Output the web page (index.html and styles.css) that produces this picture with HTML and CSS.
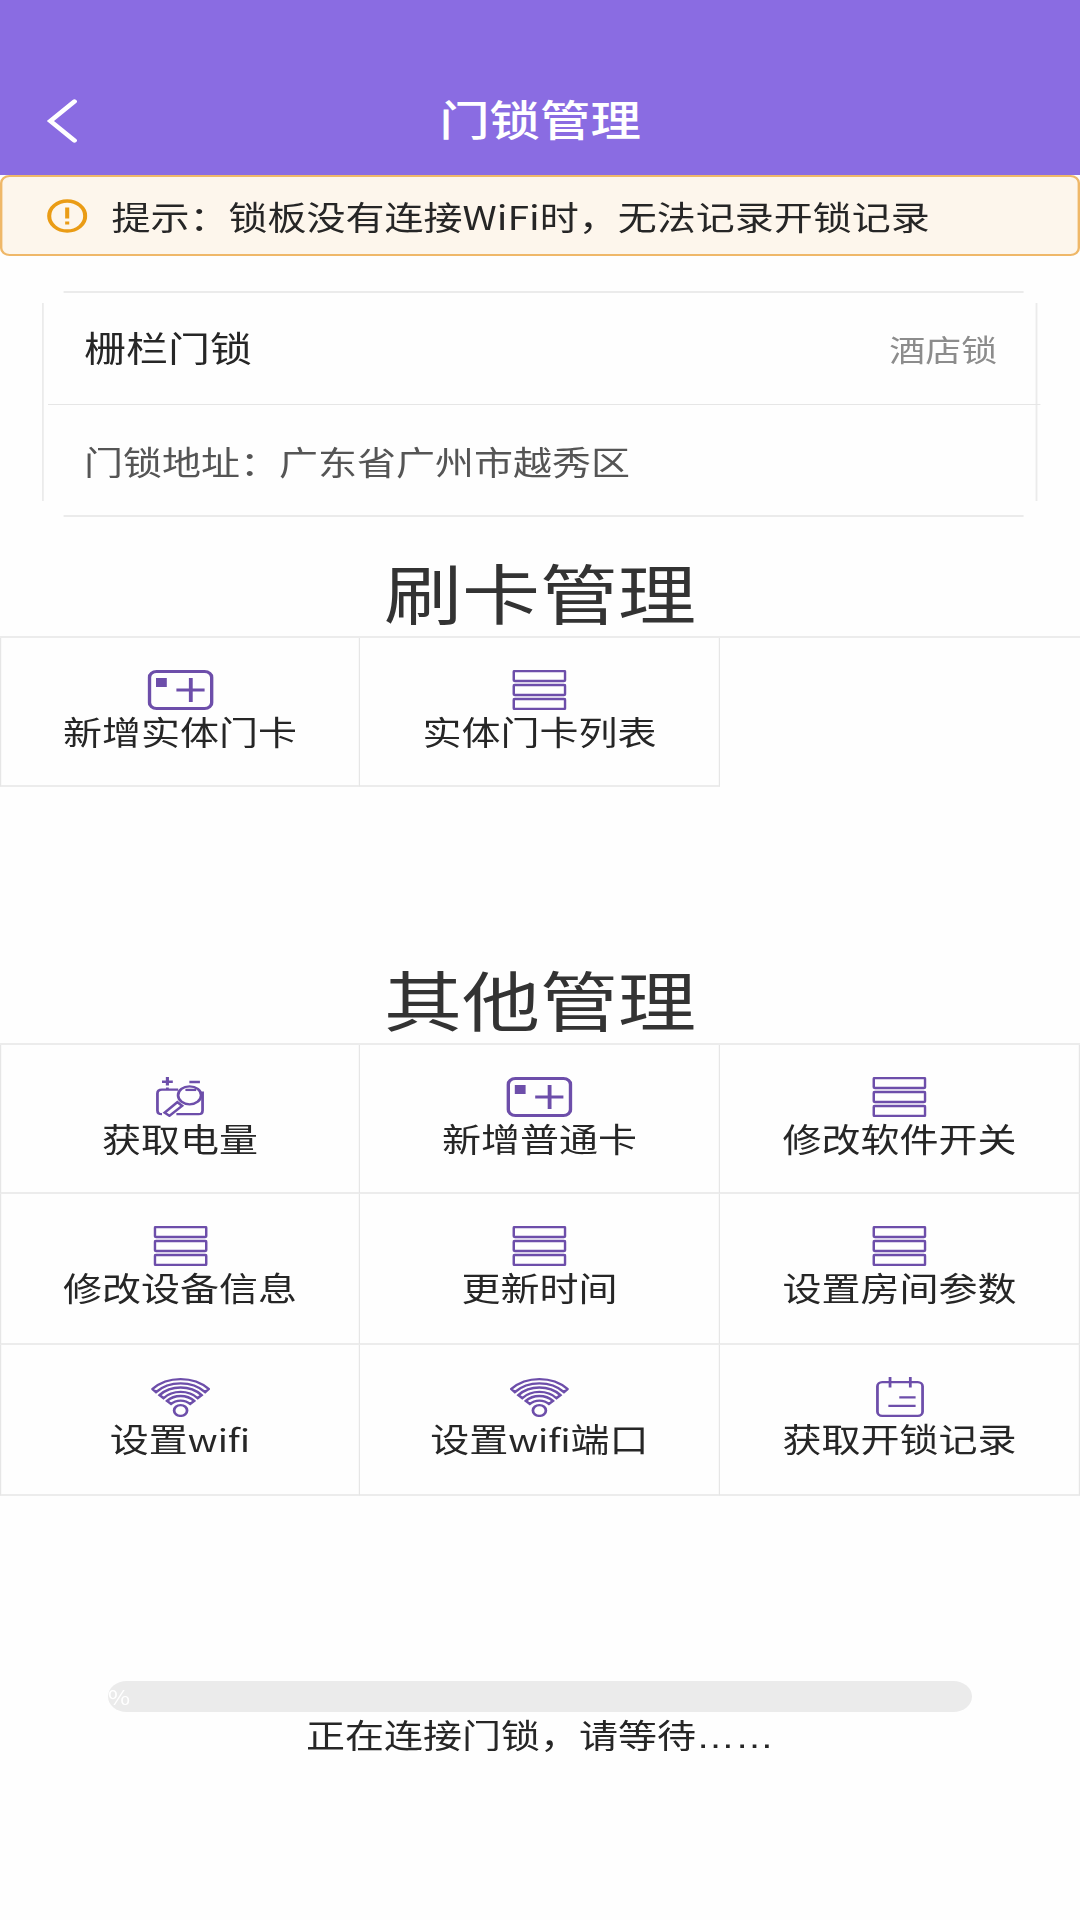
FILE: index.html
```
<!DOCTYPE html>
<html lang="zh-CN">
<head>
  <meta charset="UTF-8">
  <title>门锁管理</title>
  <meta name="viewport" content="width=device-width, initial-scale=1.0">
  <link rel="stylesheet" href="styles.css">
</head>
<body>
  <!-- icons -->
  <svg class="sprite" width="0" height="0">
    <symbol id="icon-card" viewBox="0 0 55 40">
      <rect x="1.5" y="1.5" width="52" height="37" rx="6" stroke-width="3"/>
      <rect x="7" y="8" width="9" height="9" fill="currentColor" stroke="none"/>
      <path d="M24 20h23.5M36 8v24" stroke-width="3.2"/>
    </symbol>
    <symbol id="icon-list" viewBox="0 0 45 40">
      <rect x="1" y="1" width="43" height="10" rx="1"/>
      <rect x="1" y="15" width="43" height="10" rx="1"/>
      <rect x="1" y="29" width="43" height="10" rx="1"/>
    </symbol>
    <symbol id="icon-battery" viewBox="0 0 40 40">
      <path d="M5 4.7h9M9.5 0v8.5M27.8 5h8.8" stroke-width="2.6"/>
      <path d="M5 37.2Q1.2 37.2 1.2 33.5V16.5Q1.2 12.7 5 12.7H18.5M9.5 10.5v2M17 37.2h18.5Q38.8 37.2 38.8 33.5V14.5"/>
      <ellipse cx="28" cy="18.3" rx="9.6" ry="9"/>
      <path d="M17.8 25.2l4 3.6-10.6 10-4-3.2z"/>
      <path d="M24.5 12.9h9"/>
    </symbol>
    <symbol id="icon-wifi" viewBox="0 0 49 40">
      <path d="M1 12A33 33 0 0 1 48 12L45 15.1A28.5 28.5 0 0 0 4 15.1Z"/>
      <path d="M7 18.1A24 24 0 0 1 42 18.1L38.8 21.2A19.5 19.5 0 0 0 10.2 21.2Z"/>
      <path d="M13.2 23.9A15.5 15.5 0 0 1 35.8 23.9L32.5 27A11 11 0 0 0 16.5 27Z"/>
      <circle cx="24.5" cy="33.5" r="5.4"/>
    </symbol>
    <symbol id="icon-record" viewBox="0 0 40 40">
      <rect x="1.2" y="5.2" width="37.6" height="33.6" rx="4"/>
      <path d="M11.7 0v10.5M28.6 0v10.5M19.4 20.4H33M10.3 28.8H33"/>
    </symbol>
  </svg>

  <div class="page">
    <header class="navbar">
      <svg class="back" width="26" height="44" viewBox="0 0 26 44"><path d="M23 2.5L3 22l20 19.5"/></svg>
      <h1 class="title">门锁管理</h1>
    </header>

    <div class="tip">
      <svg class="tip-icon" width="34" height="34" viewBox="0 0 34 34">
        <circle cx="17" cy="17" r="15"/>
        <path d="M17 8.5v11M17 22.5v3"/>
      </svg>
      <span>提示：锁板没有连接WiFi时，无法记录开锁记录</span>
    </div>

    <section class="card">
      <div class="card-head">
        <span class="lock-name">栅栏门锁</span>
        <span class="lock-type">酒店锁</span>
      </div>
      <div class="card-body">门锁地址：广东省广州市越秀区</div>
    </section>

    <h2 class="heading">刷卡管理</h2>
    <div class="grid">
      <div class="cell"><svg class="icon icon-wide"><use href="#icon-card"/></svg><span>新增实体门卡</span></div>
      <div class="cell"><svg class="icon icon-list"><use href="#icon-list"/></svg><span>实体门卡列表</span></div>
    </div>

    <h2 class="heading heading-other">其他管理</h2>
    <div class="grid">
      <div class="cell"><svg class="icon"><use href="#icon-battery"/></svg><span>获取电量</span></div>
      <div class="cell"><svg class="icon icon-wide"><use href="#icon-card"/></svg><span>新增普通卡</span></div>
      <div class="cell"><svg class="icon icon-list"><use href="#icon-list"/></svg><span>修改软件开关</span></div>
      <div class="cell"><svg class="icon icon-list"><use href="#icon-list"/></svg><span>修改设备信息</span></div>
      <div class="cell"><svg class="icon icon-list"><use href="#icon-list"/></svg><span>更新时间</span></div>
      <div class="cell"><svg class="icon icon-list"><use href="#icon-list"/></svg><span>设置房间参数</span></div>
      <div class="cell"><svg class="icon icon-wifi"><use href="#icon-wifi"/></svg><span>设置<span class="latin">wifi</span></span></div>
      <div class="cell"><svg class="icon icon-wifi"><use href="#icon-wifi"/></svg><span>设置<span class="latin">wifi</span>端口</span></div>
      <div class="cell"><svg class="icon"><use href="#icon-record"/></svg><span>获取开锁记录</span></div>
    </div>

    <div class="progress"><span class="percent">%</span></div>
    <p class="status">正在连接门锁，请等待<span class="dots">……</span></p>
  </div>
</body>
</html>
```
FILE: styles.css
```
* {
  box-sizing: border-box;
}

body {
  margin: 0;
  background: #fefefe;
  overflow: hidden;
}

.sprite {
  display: block;
}

/* 900 wide layout stretched to the 1080 screen */
.page {
  width: 900px;
  height: 1920px;
  transform: scaleX(1.2);
  transform-origin: 0 0;
  font-family: "Noto Sans CJK SC", sans-serif;
  font-size: 32.5px;
  color: #262626;
}

.navbar {
  display: grid;
  grid-template-columns: 1fr auto 1fr;
  align-items: center;
  height: 175px;
  padding: 66px 39px 0;
  background: #8a6ce2;
  color: #fff;
}

.back {
  fill: none;
  stroke: #fff;
  stroke-width: 4.2;
  stroke-linecap: round;
}

.title {
  margin: 0;
  padding-bottom: 5px;
  font-size: 42px;
  font-weight: 500;
  line-height: 60px;
}

.tip {
  display: flex;
  align-items: center;
  gap: 20px;
  height: 81px;
  padding-left: 37px;
  border: 2.5px solid #efb869;
  border-radius: 8px;
  background: #fdf6ec;
}

.tip-icon {
  fill: none;
  stroke: #ea9c15;
  stroke-width: 3.4;
}

.card {
  width: 832px;
  height: 226px;
  margin: 35px 0 0 35px;
  /* four edges that stop short of the corners */
  background:
    linear-gradient(#ebebeb, #ebebeb) 18px 0 / 800px 2px no-repeat,
    linear-gradient(#ebebeb, #ebebeb) 18px 100% / 800px 2px no-repeat,
    linear-gradient(#ebebeb, #ebebeb) 0 12px / 1.5px 198px no-repeat,
    linear-gradient(#ebebeb, #ebebeb) 828px 12px / 1.5px 198px no-repeat;
}

.card-head,
.card-body {
  display: flex;
  align-items: center;
  justify-content: space-between;
  height: 114px;
  margin-left: 5px;
  padding: 0 36px 0 30px;
}

.card-head {
  border-bottom: 1px solid #e6e6e6;
}

.card-body {
  height: 110px;
  color: #555;
}

.lock-name {
  padding-bottom: 2px;
  font-size: 35px;
}

.lock-type {
  font-size: 30px;
  color: #8c8c8c;
}

.heading {
  margin: 30px 0 0;
  font-size: 65px;
  font-weight: 400;
  line-height: 89px;
  text-align: center;
  color: #333;
}

.heading-other {
  margin-top: 167px;
}

.grid {
  display: grid;
  grid-template-columns: repeat(3, 300px);
  grid-template-rows: 149px;
  grid-auto-rows: 151px;
  border-top: 2px solid #ececec;
}

.cell {
  display: flex;
  flex-direction: column;
  align-items: center;
  padding-top: 32px;
  border-right: 1px solid #e6e6e6;
  border-bottom: 2px solid #ececec;
  line-height: 42px;
}

.cell:nth-child(3n + 1) {
  border-left: 1px solid #e6e6e6;
}

.icon {
  flex: none;
  width: 40px;
  height: 40px;
  fill: none;
  stroke: currentColor;
  stroke-width: 2.3;
  color: #6d4eaa;
}

.icon-wide {
  width: 55px;
}

.icon-list {
  width: 45px;
}

.icon-wifi {
  width: 49px;
}

.latin {
  font-size: 31px;
}

.progress {
  display: flex;
  align-items: center;
  width: 720px;
  height: 31px;
  margin: 185px auto 0;
  border-radius: 16px;
  background: #ebebeb;
}

.percent {
  font-size: 20px;
  line-height: 31px;
  color: #fff;
}

.status {
  margin: 0;
  line-height: 43px;
  text-align: center;
}

.dots {
  font-family: "Liberation Sans", sans-serif;
}
```
